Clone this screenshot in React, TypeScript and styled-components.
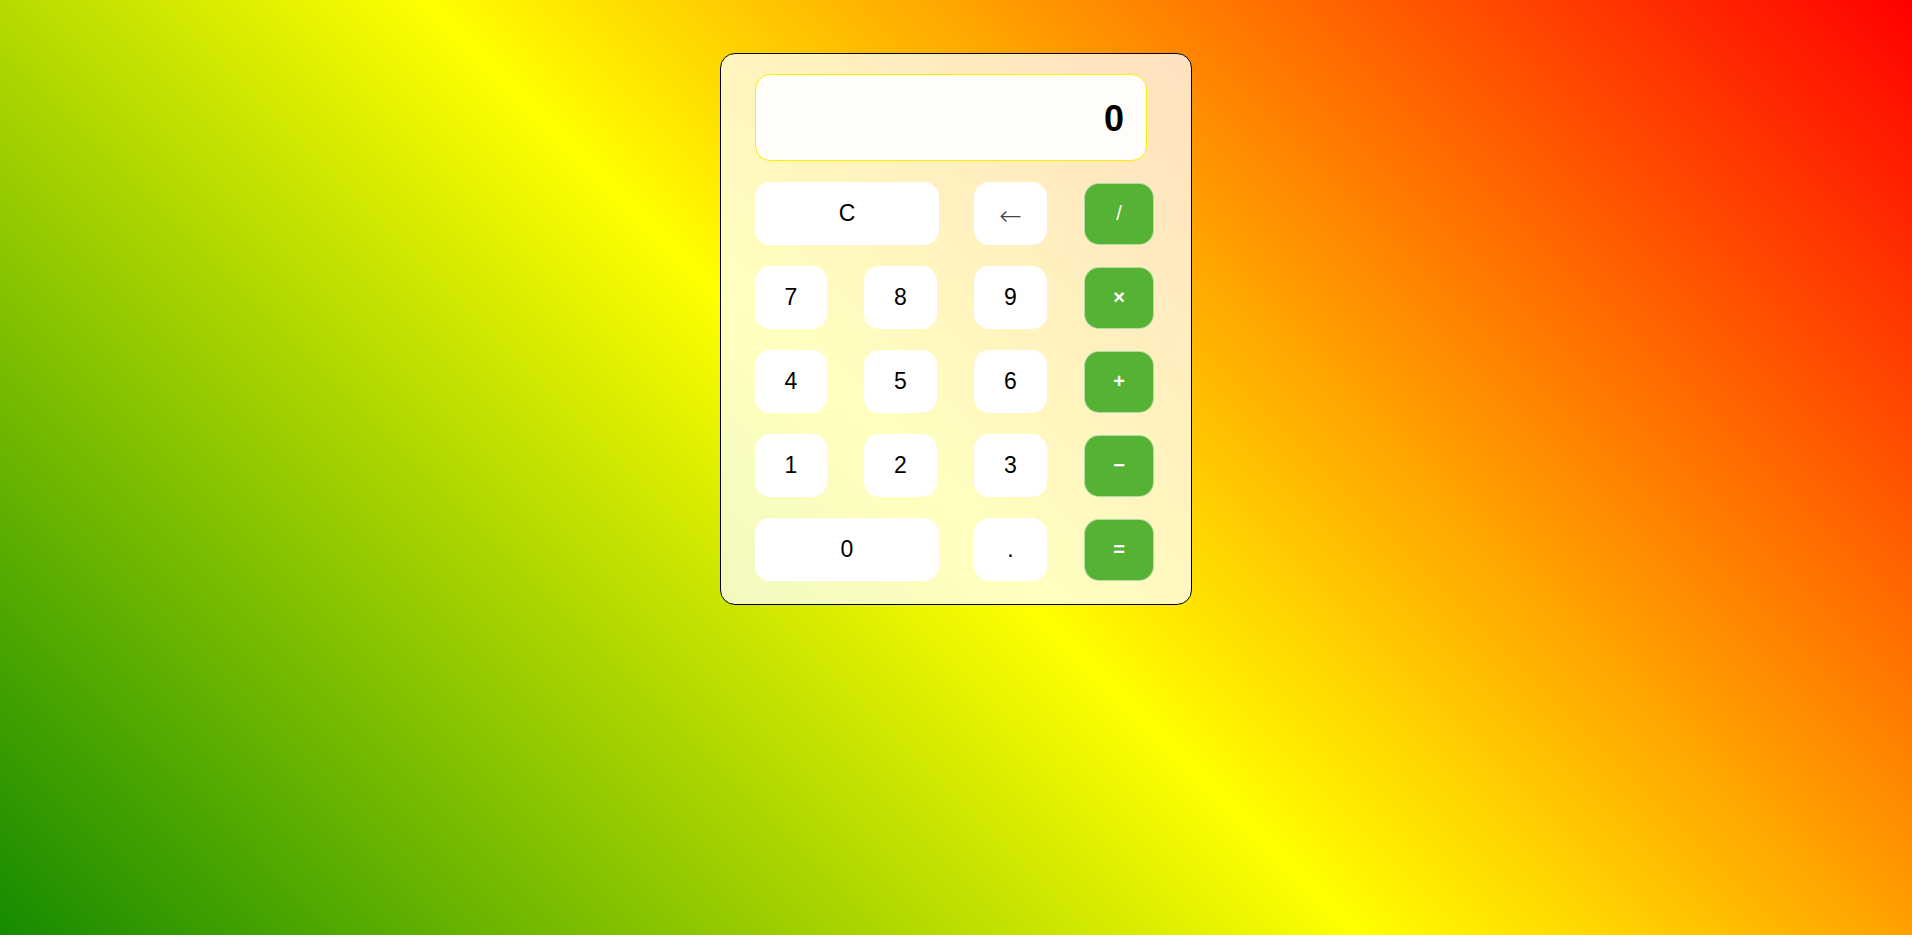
import React from 'react';
import styled, { createGlobalStyle } from 'styled-components';

type Key = { label: string; kind: 'num' | 'op'; wide?: boolean; light?: boolean };

const keys: Key[] = [
  { label: 'C', kind: 'num', wide: true },
  { label: '←', kind: 'num' },
  { label: '/', kind: 'op', light: true },
  { label: '7', kind: 'num' },
  { label: '8', kind: 'num' },
  { label: '9', kind: 'num' },
  { label: '×', kind: 'op' },
  { label: '4', kind: 'num' },
  { label: '5', kind: 'num' },
  { label: '6', kind: 'num' },
  { label: '+', kind: 'op' },
  { label: '1', kind: 'num' },
  { label: '2', kind: 'num' },
  { label: '3', kind: 'num' },
  { label: '−', kind: 'op' },
  { label: '0', kind: 'num', wide: true },
  { label: '.', kind: 'num' },
  { label: '=', kind: 'op' },
];

export default function App() {
  return (
    <>
      <GlobalStyle />
      <Page>
        <Calculator>
          <Display>0</Display>
          <Keypad>
            {keys.map(k => (
              <KeyButton key={k.label} kind={k.kind} wide={k.wide} light={k.light}>
                {k.label === '←' ? <Arrow>{k.label}</Arrow> : k.label}
              </KeyButton>
            ))}
          </Keypad>
        </Calculator>
      </Page>
    </>
  );
}

const GlobalStyle = createGlobalStyle`
  html, body {
    margin: 0;
    padding: 0;
  }
  body {
    font-family: "Liberation Sans", Arial, sans-serif;
  }
`;

const Page = styled.div`
  box-sizing: border-box;
  height: 100vh;
  overflow: hidden;
  padding-top: 53px;
  background: linear-gradient(45deg, #008000, #ffff00, #ff0000) 0 0 / 100% calc(100% + 127px) no-repeat;
`;

const Calculator = styled.div`
  box-sizing: border-box;
  width: 472px;
  margin: 0 auto;
  padding: 20px 36px 23px 34px;
  border: 1px solid #000;
  border-radius: 15px;
  background: rgba(255, 255, 255, 0.75);
  display: flex;
  flex-direction: column;
  gap: 21px;
`;

const Display = styled.div`
  box-sizing: border-box;
  width: 392px;
  height: 87px;
  border: 1px solid #ffee00;
  border-radius: 15px;
  background: rgba(255, 255, 255, 0.9);
  display: flex;
  align-items: center;
  justify-content: flex-end;
  padding: 2px 22px 0 0;
  font-size: 36px;
  font-weight: 700;
  color: #000;
`;

const Keypad = styled.div`
  display: grid;
  grid-template-columns: 72px 73px 73px 70px;
  grid-auto-rows: 63px;
  column-gap: 37px;
  row-gap: 21px;
`;

const KeyButton = styled.button<{ kind: 'num' | 'op'; wide?: boolean; light?: boolean }>`
  box-sizing: border-box;
  grid-column: ${p => (p.wide ? 'span 2' : 'auto')};
  width: ${p => (p.wide ? '184px' : '100%')};
  height: ${p => (p.kind === 'op' ? '62px' : '63px')};
  align-self: center;
  border: ${p => (p.kind === 'op' ? '1px solid rgba(255, 255, 255, 0.55)' : 'none')};
  border-radius: 15px;
  background: ${p => (p.kind === 'op' ? '#56b234' : '#fff')};
  color: ${p => (p.kind === 'op' ? '#fff' : '#000')};
  font-family: "Liberation Sans", Arial, sans-serif;
  font-size: ${p => (p.kind === 'op' ? '20px' : '23px')};
  font-weight: ${p => (p.kind === 'op' && !p.light ? 700 : 400)};
  display: flex;
  align-items: center;
  justify-content: center;
  padding: 0;
  cursor: pointer;
`;

const Arrow = styled.span`
  font-family: "DejaVu Sans", sans-serif;
  font-size: 27px;
  font-weight: 200;
  line-height: 1;
  color: #444;
  transform: translateY(2px);
`;
